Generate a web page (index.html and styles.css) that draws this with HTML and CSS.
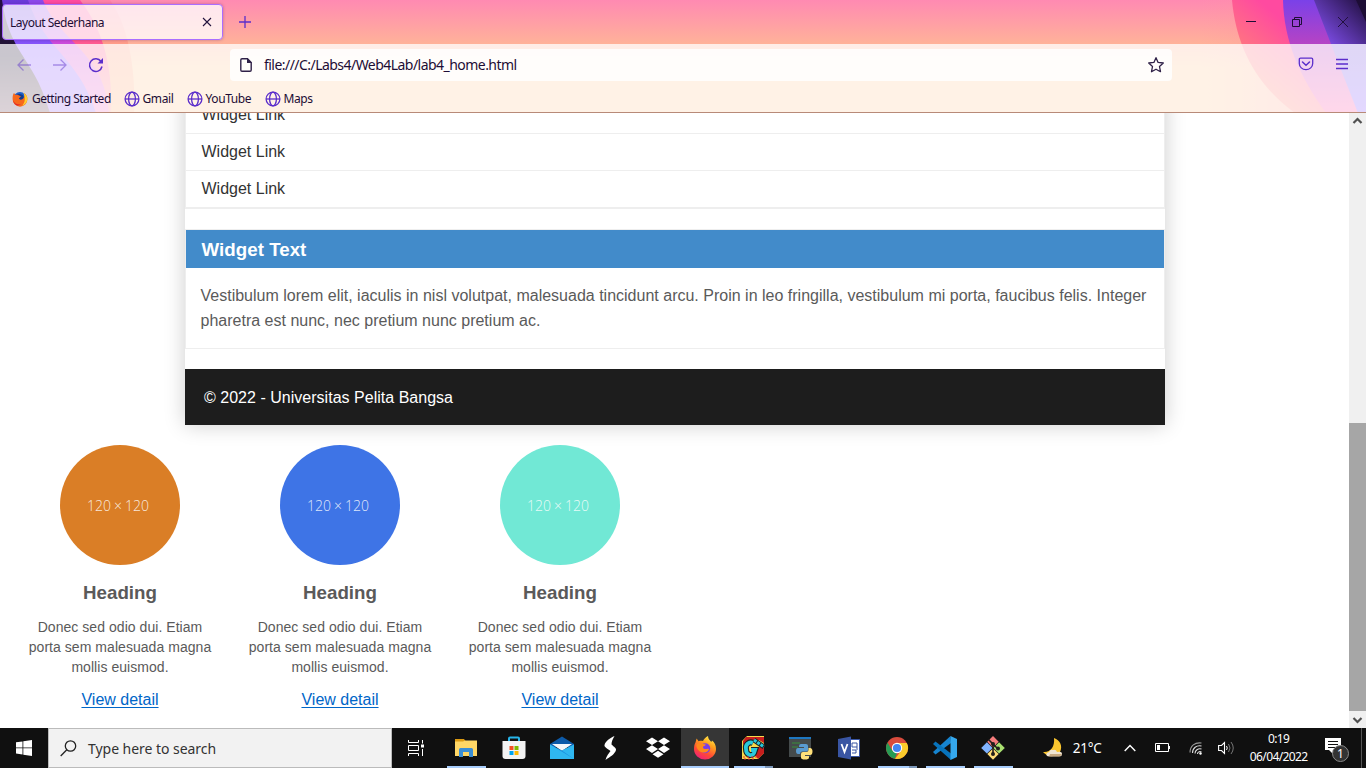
FILE: index.html
```html
<!DOCTYPE html>
<html lang="en">
<head>
<meta charset="utf-8">
<title>Layout Sederhana</title>
<link rel="stylesheet" href="styles.css">
</head>
<body>
<svg class="defs" width="0" height="0" aria-hidden="true">
  <defs>
    <linearGradient id="gFox" x1="0.8" y1="0" x2="0.3" y2="1"><stop offset="0" stop-color="#fff44f"/><stop offset=".35" stop-color="#ffa01e"/><stop offset=".7" stop-color="#ff4a35"/><stop offset="1" stop-color="#f0207a"/></linearGradient>
    <symbol id="globe" viewBox="0 0 16 16"><g fill="none" stroke="#5b2ecb" stroke-width="1.3"><circle cx="8" cy="8" r="6.9"/><ellipse cx="8" cy="8" rx="3.4" ry="6.9"/><path d="M1 8h14"/></g></symbol>
    <symbol id="fox" viewBox="0 0 24 24">
      <path fill="url(#gFox)" d="M2.500 6.500 3.600 2.500l2 2.700C7 4.800 8.500 4.700 10 5c1-2 2.500-4 5-5C15 3 17 4 18.300 6L19 4.500C21.500 6.500 23 9 23 13a11 10.500 0 0 1-22 0C1 10 1.500 8 2.500 6.500z"/>
      <circle cx="12.200" cy="12.200" r="5" fill="#7a3ee8"/>
      <path fill="#ff8a1c" d="M3.500 8.500c2-1.700 4.500-1.500 6-.6 1 .2 2.500.1 3.200.5-.2 1.300-2.200 1.600-2.700 2.300-.2 1 .5 2.500 2.300 2.300 1.700-.2 2.700-.8 3.700.2-1 2.500-3.500 3.800-6.500 3.300-4-.8-6.500-4.500-6-8z"/>
    </symbol>
    <symbol id="foxblue" viewBox="0 0 24 24">
      <circle cx="12" cy="11.500" r="10" fill="#1d5fc9"/>
      <path fill="#123a8a" d="M6 6q5-3 10 0 3 4 0 9-5 3-9 0z"/>
      <path fill="#f7681c" d="M2 4.500l1-1.500 2.500 3c2-1 4-.5 5 .8l3 1.200-3 3c0 2 3 3 5 1.500 3-2 4-5 2.500-9C22 6 23.500 9 23 13a11 10.500 0 0 1-22 0C.8 9.500 1 7 2 4.500z"/>
      <path fill="#ffcf2e" d="M17 2.500C22 6 23.500 9 23 13c-.5 4-4 8-8 9 4-4 6-10 2-19.500z"/>
      <path fill="#e0242c" d="M1.500 14c2 5 7 7 12 6-3 3-10 3-12-6z"/>
    </symbol>
  </defs>
</svg>

<header class="browser">
  <svg class="theme" viewBox="0 0 1366 113" preserveAspectRatio="none" aria-hidden="true">
    <defs>
      <linearGradient id="sky" x1="0" y1="0" x2="0" y2="1"><stop offset="0" stop-color="#ff8ab2"/><stop offset=".39" stop-color="#ffb299"/><stop offset=".6" stop-color="#ffc996"/><stop offset="1" stop-color="#ffc996"/></linearGradient>
      <linearGradient id="outerL" x1="0" y1="0" x2="0" y2="1"><stop offset="0" stop-color="#ff80a8"/><stop offset=".5" stop-color="#ffa480"/><stop offset="1" stop-color="#ffb47c"/></linearGradient>
      <linearGradient id="violet" x1="0" y1="0" x2="0" y2="1"><stop offset="0" stop-color="#6a3ad8"/><stop offset=".45" stop-color="#8a58ff"/><stop offset="1" stop-color="#a070f0"/></linearGradient>
      <linearGradient id="innerL" x1="0" y1="0" x2="0" y2="1"><stop offset="0" stop-color="#8a48ea"/><stop offset=".35" stop-color="#ca48dc"/><stop offset="1" stop-color="#f57ac4"/></linearGradient>
      <linearGradient id="pinkL" x1="0" y1="0" x2="0" y2="1"><stop offset="0" stop-color="#ff4aa0"/><stop offset=".4" stop-color="#ff5a90"/><stop offset="1" stop-color="#ff9a90"/></linearGradient>
      <linearGradient id="orangeR" x1="0" y1="1" x2="1" y2="0"><stop offset="0" stop-color="#ffb299"/><stop offset=".25" stop-color="#ff8078"/><stop offset=".6" stop-color="#ff4aa0"/><stop offset="1" stop-color="#ff4aa0"/></linearGradient>
      <linearGradient id="purpleR" x1="0" y1="0" x2="0" y2="1"><stop offset="0" stop-color="#7a41e8"/><stop offset=".35" stop-color="#b043c8"/><stop offset="1" stop-color="#ff5aa8"/></linearGradient>
      <linearGradient id="blueR" gradientUnits="userSpaceOnUse" x1="1325" y1="50" x2="1366" y2="10"><stop offset="0" stop-color="#8552f5"/><stop offset="1" stop-color="#2a1550"/></linearGradient>
      <linearGradient id="blueRLow" x1="0" y1="0" x2="0" y2="1"><stop offset="0" stop-color="#7b5ad8"/><stop offset="1" stop-color="#8a5cff"/></linearGradient>
      <linearGradient id="fadeR" x1="0" y1="0" x2="1" y2="0"><stop offset="0" stop-color="#ff9aa0" stop-opacity="0"/><stop offset="1" stop-color="#ff8aa0" stop-opacity=".5"/></linearGradient>
      <linearGradient id="darkL" x1="0" y1="0" x2="0" y2="1"><stop offset="0" stop-color="#251044"/><stop offset=".5" stop-color="#211433"/><stop offset="1" stop-color="#6e4a5e"/></linearGradient>
    </defs>
    <path fill="url(#sky)" d="M0 0h1366v113H0z"/>
    <path fill="url(#outerL)" d="M0 0h110c17 24 26 65 24 113H0z"/>
    <path fill="url(#pinkL)" d="M0 0h80c20 26 33 60 31 113H0z"/>
    <path fill="url(#innerL)" d="M0 0h43c16 42 62 52 66 113H0z"/>
    <path fill="url(#violet)" d="M0 0h28c16 50 50 56 68 113H0z"/>
    <path fill="url(#darkL)" d="M0 0h2c8 56 32 56 48 113H0z"/>
    <path fill="url(#fadeR)" d="M1200 0h100v113h-100z"/>
    <path fill="url(#orangeR)" d="M1232 0h134v113h-71C1255 84 1236 45 1232 0z"/>
    <path fill="url(#purpleR)" d="M1283 0h83v113h-40C1300 77 1284 42 1283 0z"/>
    <path fill="url(#blueR)" d="M1314 0h52v44h-35z"/>
    <path fill="url(#blueRLow)" d="M1331 44h35v69h-8z"/>
    <path fill="#1d0d35" d="M1356 0h10v22z"/>
  </svg>
  <div class="tabstrip">
    <div class="tab"><span class="t-tab">Layout Sederhana</span>
      <svg width="10" height="10" viewBox="0 0 10 10"><path d="M1 1l8 8M9 1L1 9" stroke="#23143d" stroke-width="1.1"/></svg></div>
    <svg class="plus" width="12" height="12" viewBox="0 0 12 12"><path d="M6 0v12M0 6h12" stroke="#5b2ecb" stroke-width="1.3"/></svg>
    <div class="winctl">
      <svg width="10" height="10" viewBox="0 0 10 10"><path d="M0 4.500h10" stroke="#1d0d35"/></svg>
      <svg width="10" height="10" viewBox="0 0 10 10"><path d="M.5 2.500h7v7h-7zM2.500 2.500v-2h7v7h-2" fill="none" stroke="#1d0d35"/></svg>
      <svg width="10" height="10" viewBox="0 0 10 10"><path d="M0 0l10 10M10 0L0 10" stroke="#1d0d35" stroke-width=".9"/></svg>
    </div>
  </div>
  <div class="toolbars">
    <div class="navbar">
      <div class="navbtns">
        <svg class="dim" width="16" height="16" viewBox="0 0 16 16"><path d="M15 8H2M7.500 2.500L2 8l5.500 5.500" fill="none" stroke="#5b2ecb" stroke-width="1.300"/></svg>
        <svg class="dim" width="16" height="16" viewBox="0 0 16 16"><path d="M1 8h13M8.500 2.500L14 8l-5.500 5.500" fill="none" stroke="#5b2ecb" stroke-width="1.300"/></svg>
        <svg width="16" height="16" viewBox="0 0 16 16"><path d="M14 9.500A6.300 6.300 0 1 1 13 4.500" fill="none" stroke="#5b2ecb" stroke-width="1.500"/><path d="M15 1v5.500H9.500z" fill="#5b2ecb"/></svg>
      </div>
      <div class="urlbar">
        <svg width="14" height="16" viewBox="0 0 14 16"><path d="M3 1.800h5.500L12.200 5.500v7.500q0 1.200-1.200 1.200H3q-1.200 0-1.200-1.200V3q0-1.200 1.200-1.200z" fill="none" stroke="#2f2148" stroke-width="1.400"/><path d="M8 1.200V6h5z" fill="#2f2148"/></svg>
        <span class="t-url">file:///C:/Labs4/Web4Lab/lab4_home.html</span>
        <svg class="star" width="18" height="18" viewBox="0 0 18 18"><path d="M9 1.700l2.100 4.700 5.200.6-3.800 3.500 1 5.200L9 13.200l-4.500 2.500 1-5.200L1.700 7l5.200-.6z" fill="none" stroke="#2f2148" stroke-width="1.300" stroke-linejoin="round"/></svg>
      </div>
      <div class="tools">
        <svg width="16" height="16" viewBox="0 0 16 16"><path d="M2.500 2.200h11q1.200 0 1.200 1.200V7.500a6.700 6.200 0 0 1-13.400 0V3.400q0-1.200 1.200-1.200z" fill="none" stroke="#5b2ecb" stroke-width="1.300"/><path d="M4.500 6L8 9.300 11.500 6" fill="none" stroke="#5b2ecb" stroke-width="1.500" stroke-linecap="round"/></svg>
        <svg width="12" height="12" viewBox="0 0 12 12"><path d="M0 1.500h12M0 6h12M0 10.500h12" stroke="#5b2ecb" stroke-width="1.300"/></svg>
      </div>
    </div>
    <nav class="bookmarks">
      <span class="bm bm-fox"><svg width="16" height="16"><use href="#foxblue"/></svg><span>Getting Started</span></span>
      <span class="bm bm-gmail"><svg width="16" height="16"><use href="#globe"/></svg><span>Gmail</span></span>
      <span class="bm bm-yt"><svg width="16" height="16"><use href="#globe"/></svg><span>YouTube</span></span>
      <span class="bm"><svg width="16" height="16"><use href="#globe"/></svg><span>Maps</span></span>
    </nav>
  </div>
</header>

<div class="viewport">
  <main class="page">
    <div class="container">
      <ul class="links"><li>Widget Link</li><li>Widget Link</li><li>Widget Link</li></ul>
      <section class="widget">
        <h3>Widget Text</h3>
        <p>Vestibulum lorem elit, iaculis in nisl volutpat, malesuada tincidunt arcu. Proin in leo fringilla, vestibulum mi porta, faucibus felis. Integer pharetra est nunc, nec pretium nunc pretium ac.</p>
      </section>
      <footer>© 2022 - Universitas Pelita Bangsa</footer>
    </div>
    <div class="row">
      <div class="box"><div class="circle orange">120 × 120</div><h3>Heading</h3><p>Donec sed odio dui. Etiam porta sem malesuada magna mollis euismod.</p><a href="#">View detail</a></div>
      <div class="box"><div class="circle blue">120 × 120</div><h3>Heading</h3><p>Donec sed odio dui. Etiam porta sem malesuada magna mollis euismod.</p><a href="#">View detail</a></div>
      <div class="box"><div class="circle mint">120 × 120</div><h3>Heading</h3><p>Donec sed odio dui. Etiam porta sem malesuada magna mollis euismod.</p><a href="#">View detail</a></div>
    </div>
  </main>
  <div class="scrollbar">
    <svg width="17" height="17" viewBox="0 0 17 17"><path d="M4.500 10l4-4 4 4" fill="none" stroke="#505050" stroke-width="2.200"/></svg>
    <div class="thumb"></div>
    <svg width="17" height="17" viewBox="0 0 17 17"><path d="M4.500 7l4 4 4-4" fill="none" stroke="#505050" stroke-width="2.200"/></svg>
  </div>
</div>

<div class="taskbar">
  <div class="start"><svg width="16" height="16" viewBox="0 0 16 16"><path fill="#fff" d="M0 2.300L6.500 1.400v6.100H0zM7.300 1.300L16 0v7.500H7.300zM0 8.300h6.500v6.200L0 13.600zM7.300 8.300H16V16l-8.700-1.300z"/></svg></div>
  <div class="search">
    <svg width="17" height="17" viewBox="0 0 17 17"><circle cx="10.500" cy="6" r="5.200" fill="none" stroke="#222" stroke-width="1.300"/><path d="M6.800 9.800L.7 16" stroke="#222" stroke-width="1.300"/></svg>
    <span class="t-search">Type here to search</span>
  </div>
  <div class="apps">
    <div class="app view"><svg width="24" height="24" viewBox="0 0 24 24" fill="none" stroke="#fff"><path d="M4.500 4v2.500h10V4M4.500 20v-2.500h10V20M4.500 9.500h10v5h-10zM18.500 4v3.500M18.500 13v7"/><path d="M17 8.500h3v3h-3z" fill="#fff" stroke="none"/></svg></div>
    <div class="app run"><svg width="24" height="24" viewBox="0 0 24 24"><path fill="#dc9a12" d="M1 3h9l1.500 2H21v4H1z"/><path fill="#ffd766" d="M1 5.500h8l2-1h12V20H1z"/><path fill="#3b8ed4" d="M5 21v-7.500q0-1.500 1.500-1.500h11q1.500 0 1.500 1.500V21h-4v-5H9v5z"/></svg></div>
    <div class="app"><svg width="24" height="24" viewBox="0 0 24 24"><path fill="none" stroke="#27b5ea" stroke-width="2" d="M7 6V2.500Q7 1.500 8 1.500h8q1 0 1 1V6"/><path fill="#f3f3f3" d="M.5 5h23v15q0 3-3 3h-17q-3 0-3-3z"/><path fill="#f25022" d="M7.500 10h4v4h-4z"/><path fill="#7fba00" d="M12.500 10h4v4h-4z"/><path fill="#00a4ef" d="M7.500 15h4v4h-4z"/><path fill="#ffb900" d="M12.500 15h4v4h-4z"/></svg></div>
    <div class="app"><svg width="24" height="24" viewBox="0 0 24 24"><path fill="#0d5aa8" d="M0 8l12-7.500L24 8v3H0z"/><path fill="#f5f7fa" d="M2 8h20l-10 7z"/><path fill="#1c93e0" d="M0 8.500l12 6 12-6V23H0z"/><path fill="#35c3f5" d="M24 8.500V23L12 14.500zM0 8.500L24 23H0z" opacity=".75"/></svg></div>
    <div class="app"><svg width="24" height="24" viewBox="0 0 24 24"><path fill="#fff" d="M16.500 0C12 2 7.500 5 6.500 9c-.4 2 2.500 3.500 6 6-2 2.500-4 5-5 9C12 21 17 18 18 14c.4-2-2-3-4.500-5.500 0-3 1-5 3-8.500z"/></svg></div>
    <div class="app"><svg width="24" height="24" viewBox="0 0 24 24"><path fill="#fff" d="M6 1.500l6 3.800-6 3.800-6-3.800zM18 1.500l6 3.800-6 3.800-6-3.800zM6 9.300l6 3.800-6 3.800-6-3.800zM18 9.300l6 3.800-6 3.800-6-3.800zM12 14.800l5.500 3.500L12 21.800l-5.500-3.500z"/></svg></div>
    <div class="app active"><svg width="24" height="24"><use href="#fox"/></svg></div>
    <div class="app run multi"><svg width="24" height="24" viewBox="0 0 24 24"><path fill="#f5d94a" d="M1 5l5-5h17v17l-6 6H1z"/><path fill="#c81e1e" d="M5 1h18v6l-5-3H9L2 9V5zM15 11h8v6l-6 6-4-5z"/><path fill="none" stroke="#202020" stroke-width="6" d="M12 7C8 5 4 9 5 13c0 6 6 8 8 4l1-3h-4"/><path fill="none" stroke="#29c9dc" stroke-width="3.800" d="M12 7C8 5 4 9 5 13c0 6 6 8 8 4l1-3h-4"/><path stroke="#202020" stroke-width="5" d="M13 4l10 7"/><path stroke="#29c9dc" stroke-width="3" stroke-dasharray="3 1" d="M13 4l10 7"/><path stroke="#e33" stroke-dasharray="2 2" d="M2 21h14M3 23h11"/></svg></div>
    <div class="app"><svg width="24" height="24" viewBox="0 0 24 24"><path fill="#454b4c" d="M0 1h22v20H0z"/><path fill="#1e78c2" d="M0 1h22v2H0z"/><path stroke="#3c7a40" stroke-width="1.500" d="M3 7h8M3 11h6"/><path fill="#5a9bd0" d="M12 8h5q2 0 2 2v4q0 1.500-2 1.500h-4q-2 0-2 2.500H9q-2 0-2-3t2-3h6v-1h-5V10q0-2 2-2z"/><path fill="#ffe07a" d="M19.500 12H21q2.500 0 2.500 3.500T21 19h-5v1h4v1.500q0 2-4 2t-4-2V18q0-2 2-2h3.500q2 0 2-2z"/></svg></div>
    <div class="app"><svg width="24" height="24" viewBox="0 0 24 24"><path fill="#fff" stroke="#3955a3" d="M12 3.500h10.500v17H12z"/><path fill="none" stroke="#3955a3" d="M15 7h5v4h-5zM15 14h4v3h-4M20 11v3"/><path fill="#3955a3" d="M1 3l13-2.500v23L1 21z"/><path d="M4.500 8l3 8 3-8" fill="none" stroke="#fff" stroke-width="1.800"/></svg></div>
    <div class="app run multi"><svg width="24" height="24" viewBox="0 0 24 24"><circle cx="12" cy="12" r="11" fill="#d94b3d"/><path fill="#279b54" d="M2.500 6.500L7.200 14.500 12 17l-2 5.800A11 11 0 0 1 2.500 6.500z"/><path fill="#fbcb2b" d="M12 7h9.800A11 11 0 0 1 10 22.800L16.500 14.500z"/><circle cx="12" cy="12" r="5.200" fill="#fff"/><circle cx="12" cy="12" r="4.100" fill="#4285f4"/></svg></div>
    <div class="app run"><svg width="24" height="24" viewBox="0 0 24 24"><path fill="#1684cf" d="M17.500 0L0 16l2.500 2.500L18 7z"/><path fill="#0873bb" d="M0 8l2.500-2.500L18 17.500V24z"/><path fill="#35a8ed" d="M17.500 0L24 3v18l-6.500 3z"/></svg></div>
    <div class="app run"><svg width="24" height="24" viewBox="0 0 24 24"><path fill="#f57c7c" d="M12 0l5.700 5.700-5.700 5.700-5.700-5.700z"/><path fill="#80b3ff" d="M5.900 6.200l5.700 5.700-5.700 5.700L.2 11.900z"/><path fill="#a9e070" d="M18.100 6.200l5.700 5.700-5.700 5.700-5.700-5.700z"/><path fill="#ffdc78" d="M12 12.400l5.700 5.700-5.700 5.700-5.700-5.700z"/><path stroke="#221e1c" stroke-width="1.600" fill="none" d="M7.500 3.500L12 8v10M12 8l5 5"/><g fill="#221e1c"><circle cx="12" cy="8" r="2"/><circle cx="12" cy="18" r="2"/><circle cx="17" cy="12.500" r="2"/></g></svg></div>
  </div>
  <div class="tray">
    <svg class="moon" width="23" height="20" viewBox="0 0 23 20"><path fill="#fbc62f" d="M12 0c6 2 9 8 6 14-3 5-12 6-17 0 7 1 12-5 11-14z"/><path fill="#f0e5d2" d="M5 18q-2-3 2-4 1-3 4-2 3-1 4 2 5-1 5 2 0 2.500-3 2.500H7z"/><path fill="#a57940" d="M8 16h12l-2 2.500H7z" opacity=".55"/></svg>
    <span class="t-temp">21°C</span>
    <svg class="chev" width="12" height="8" viewBox="0 0 12 8"><path d="M.7 7L6 1.500 11.300 7" fill="none" stroke="#fff" stroke-width="1.400"/></svg>
    <svg class="batt" width="16" height="10" viewBox="0 0 16 10"><path d="M.5.5h13v8H.5zM14.500 3v3" fill="none" stroke="#fff"/><path fill="#fff" d="M2 2h3v5H2z"/></svg>
    <svg class="wifi" width="14" height="14" viewBox="0 0 14 14"><g fill="none" stroke="#ddd" stroke-width="1.100"><path d="M1 11.500C1 5 6 1 12.500 2" stroke="#999"/><path d="M3.500 12C3.500 7 7.500 4 12.500 5"/><path d="M6 12.500C6 9.500 9 7 12.500 8"/><path d="M8.500 13C8.500 11 10.500 10 12.500 11"/></g><circle cx="11.500" cy="12.500" r="1.200" fill="#fff"/></svg>
    <svg class="vol" width="17" height="14" viewBox="0 0 17 14"><path d="M.6 4.500h2.900L6.500 1.500v11l-3-3H.6z" fill="none" stroke="#fff" stroke-width="1.100"/><path d="M8.500 5q1.500 2 0 4" fill="none" stroke="#fff"/><path d="M10.500 3q3 4 0 8M13 1q4.500 6 0 12" fill="none" stroke="#777"/></svg>
    <div class="clock"><span>0:19</span><span>06/04/2022</span></div>
    <div class="notes"><svg width="25" height="25" viewBox="0 0 25 25"><path fill="#fff" d="M0 0h16v12H8v4l-4-4H0z"/><path stroke="#111" d="M3 3.500h10M3 6.500h10M3 9.500h7"/><circle cx="15.500" cy="15.500" r="8" fill="#333" stroke="#8a8a8a"/></svg><span class="count">1</span></div>
    <div class="peek"></div>
  </div>
</div>
</body>
</html>
```
FILE: styles.css
```css
* { box-sizing: border-box; }
html, body { margin: 0; height: 100%; overflow: hidden; }
body { display: flex; flex-direction: column; width: 1366px; height: 768px; background: #fff; font-family: "Liberation Sans", Arial, sans-serif; color: #5a5a5a; font-size: 16px; }
svg { display: block; flex: none; }
.defs { position: absolute; }

/* Browser window */
.browser { position: relative; height: 113px; flex: none; font-family: "Noto Sans", sans-serif; color: #1d0d35; border-bottom: 1px solid #b88a78; white-space: nowrap; overflow: hidden; }
.theme { position: absolute; inset: 0; width: 1366px; height: 113px; }
.tabstrip { position: relative; height: 44px; display: flex; align-items: center; }
.tab { display: flex; align-items: center; justify-content: space-between; width: 221px; height: 36px; margin-left: 2px; padding: 0 10px 0 7px; border: 1px solid #aa6eff; border-radius: 4px; background: rgba(255,255,255,.78); box-shadow: 0 0 3px rgba(60,20,100,.35); font-size: 12px; }
.t-tab { letter-spacing: -.5px; padding-top: 1px; }
.plus { margin-left: 16px; }
.winctl { display: flex; gap: 36px; margin-left: auto; margin-right: 18px; }
.toolbars { position: relative; height: 68px; background: rgba(255,255,255,.76); }
.navbar { display: flex; height: 41px; align-items: center; }
.navbtns { display: flex; gap: 20px; margin-left: 16px; width: 214px; }
.dim { opacity: .45; }
.urlbar { display: flex; align-items: center; width: 942px; height: 32px; padding: 0 7px 0 9px; border-radius: 4px; background: rgba(255,255,255,.82); }
.t-url { margin-left: 11px; font-size: 14px; letter-spacing: -.54px; }
.star { margin-left: auto; }
.tools { display: flex; align-items: center; gap: 22px; margin-left: 126px; padding-bottom: 2px; }
.bookmarks { display: flex; height: 27px; align-items: center; padding-left: 12px; font-size: 12px; }
.bm { display: flex; align-items: center; gap: 3px; letter-spacing: -.4px; }
.bm-fox { width: 111.500px; gap: 4px; letter-spacing: -.5px; }
.bm-gmail { width: 63px; }
.bm-yt { width: 78px; }

/* Web page */
.viewport { display: flex; height: 615px; flex: none; overflow: hidden; }
.page { width: 1349px; overflow: hidden; }
.container { width: 980px; margin: -16px auto 0 185px; background: #fff; box-shadow: 0 0 20px rgba(0,0,0,.2); }
.links { list-style: none; margin: 0 0 20px; padding: 0; border: 1px solid #eee; border-top: 0; }
.links li { height: 37px; padding-left: 15.500px; line-height: 36px; border-bottom: 1px solid #eee; color: #333; }
.widget { height: 120px; border: 1px solid #eee; }
.widget h3 { margin: 0; padding: 1px 0 0 15.500px; height: 38px; line-height: 38px; font-size: 18.720px; letter-spacing: .04px; color: #fff; background: #428bca; }
.widget p { margin: 0; padding: 15px 14px 0 14.500px; line-height: 25px; letter-spacing: .004px; }
footer { margin-top: 20px; height: 56px; padding: 1px 0 0 19px; line-height: 56px; letter-spacing: .02px; color: #fff; background: #1d1d1d; }
.row { display: flex; margin: 20px 0 0 10px; }
.box { width: 220px; padding: 0 15px; display: flex; flex-direction: column; align-items: center; text-align: center; }
.circle { width: 120px; height: 120px; padding-right: 4px; border-radius: 50%; font: 300 14px/121px "Open Sans", sans-serif; word-spacing: -.6px; color: rgba(255,255,255,.85); }
.orange { background: #da7e26; }
.blue { background: #3e74e6; }
.mint { background: #71e8d5; }
.box h3 { margin: 17px 0 13px; font-size: 18.720px; line-height: 22px; letter-spacing: .03px; }
.box p { margin: 0; font-size: 14px; line-height: 20px; letter-spacing: .05px; }
.box a { margin-top: 14px; line-height: 18px; color: #0066c8; text-underline-offset: 2px; }
.scrollbar { display: flex; flex-direction: column; width: 17px; background: #f0f0f0; }
.thumb { height: 288px; margin-top: 293px; background: #a6a6a6; }

/* Taskbar */
.taskbar { display: flex; height: 40px; flex: none; background: #101010; color: #fff; font-family: "Noto Sans", sans-serif; white-space: nowrap; }
.start { display: flex; width: 48px; align-items: center; justify-content: center; }
.search { display: flex; width: 344px; align-items: center; padding-left: 11px; background: #f2f2f2; border: 1px solid #bbb; color: #333; font-size: 14px; }
.t-search { margin-left: 11px; letter-spacing: -.04px; }
.apps { display: flex; }
.app { position: relative; display: flex; align-items: center; justify-content: center; width: 47.900px; height: 40px; }
.view { width: 50px; padding-right: 2px; }
.active { background: #363636; border-bottom: 2px solid #a8cdfb; padding-top: 2px; }
.run::after { content: ""; position: absolute; left: 5px; bottom: 0; width: 39px; height: 2px; background: #a8cdfb; }
.multi::after { background: linear-gradient(90deg, #a8cdfb 31px, #7c97b9 31px); }
.tray { display: flex; flex: 1; align-items: center; }
.moon { margin-left: 25px; }
.t-temp { margin-left: 8px; width: 51px; font-size: 13.500px; letter-spacing: -.2px; }
.batt { margin-left: 19px; }
.wifi { margin-left: 18px; }
.vol { margin-left: 15px; }
.clock { display: flex; flex-direction: column; align-items: center; width: 60px; margin-left: 14px; font-size: 12px; line-height: 18px; letter-spacing: -.6px; }
.notes { position: relative; margin-left: auto; margin-right: 11px; padding-top: 5px; }
.count { position: absolute; left: 12px; top: 12px; font-size: 12px; line-height: 17px; }
.peek { width: 1px; height: 40px; margin-right: 4px; background: #555; }
```
